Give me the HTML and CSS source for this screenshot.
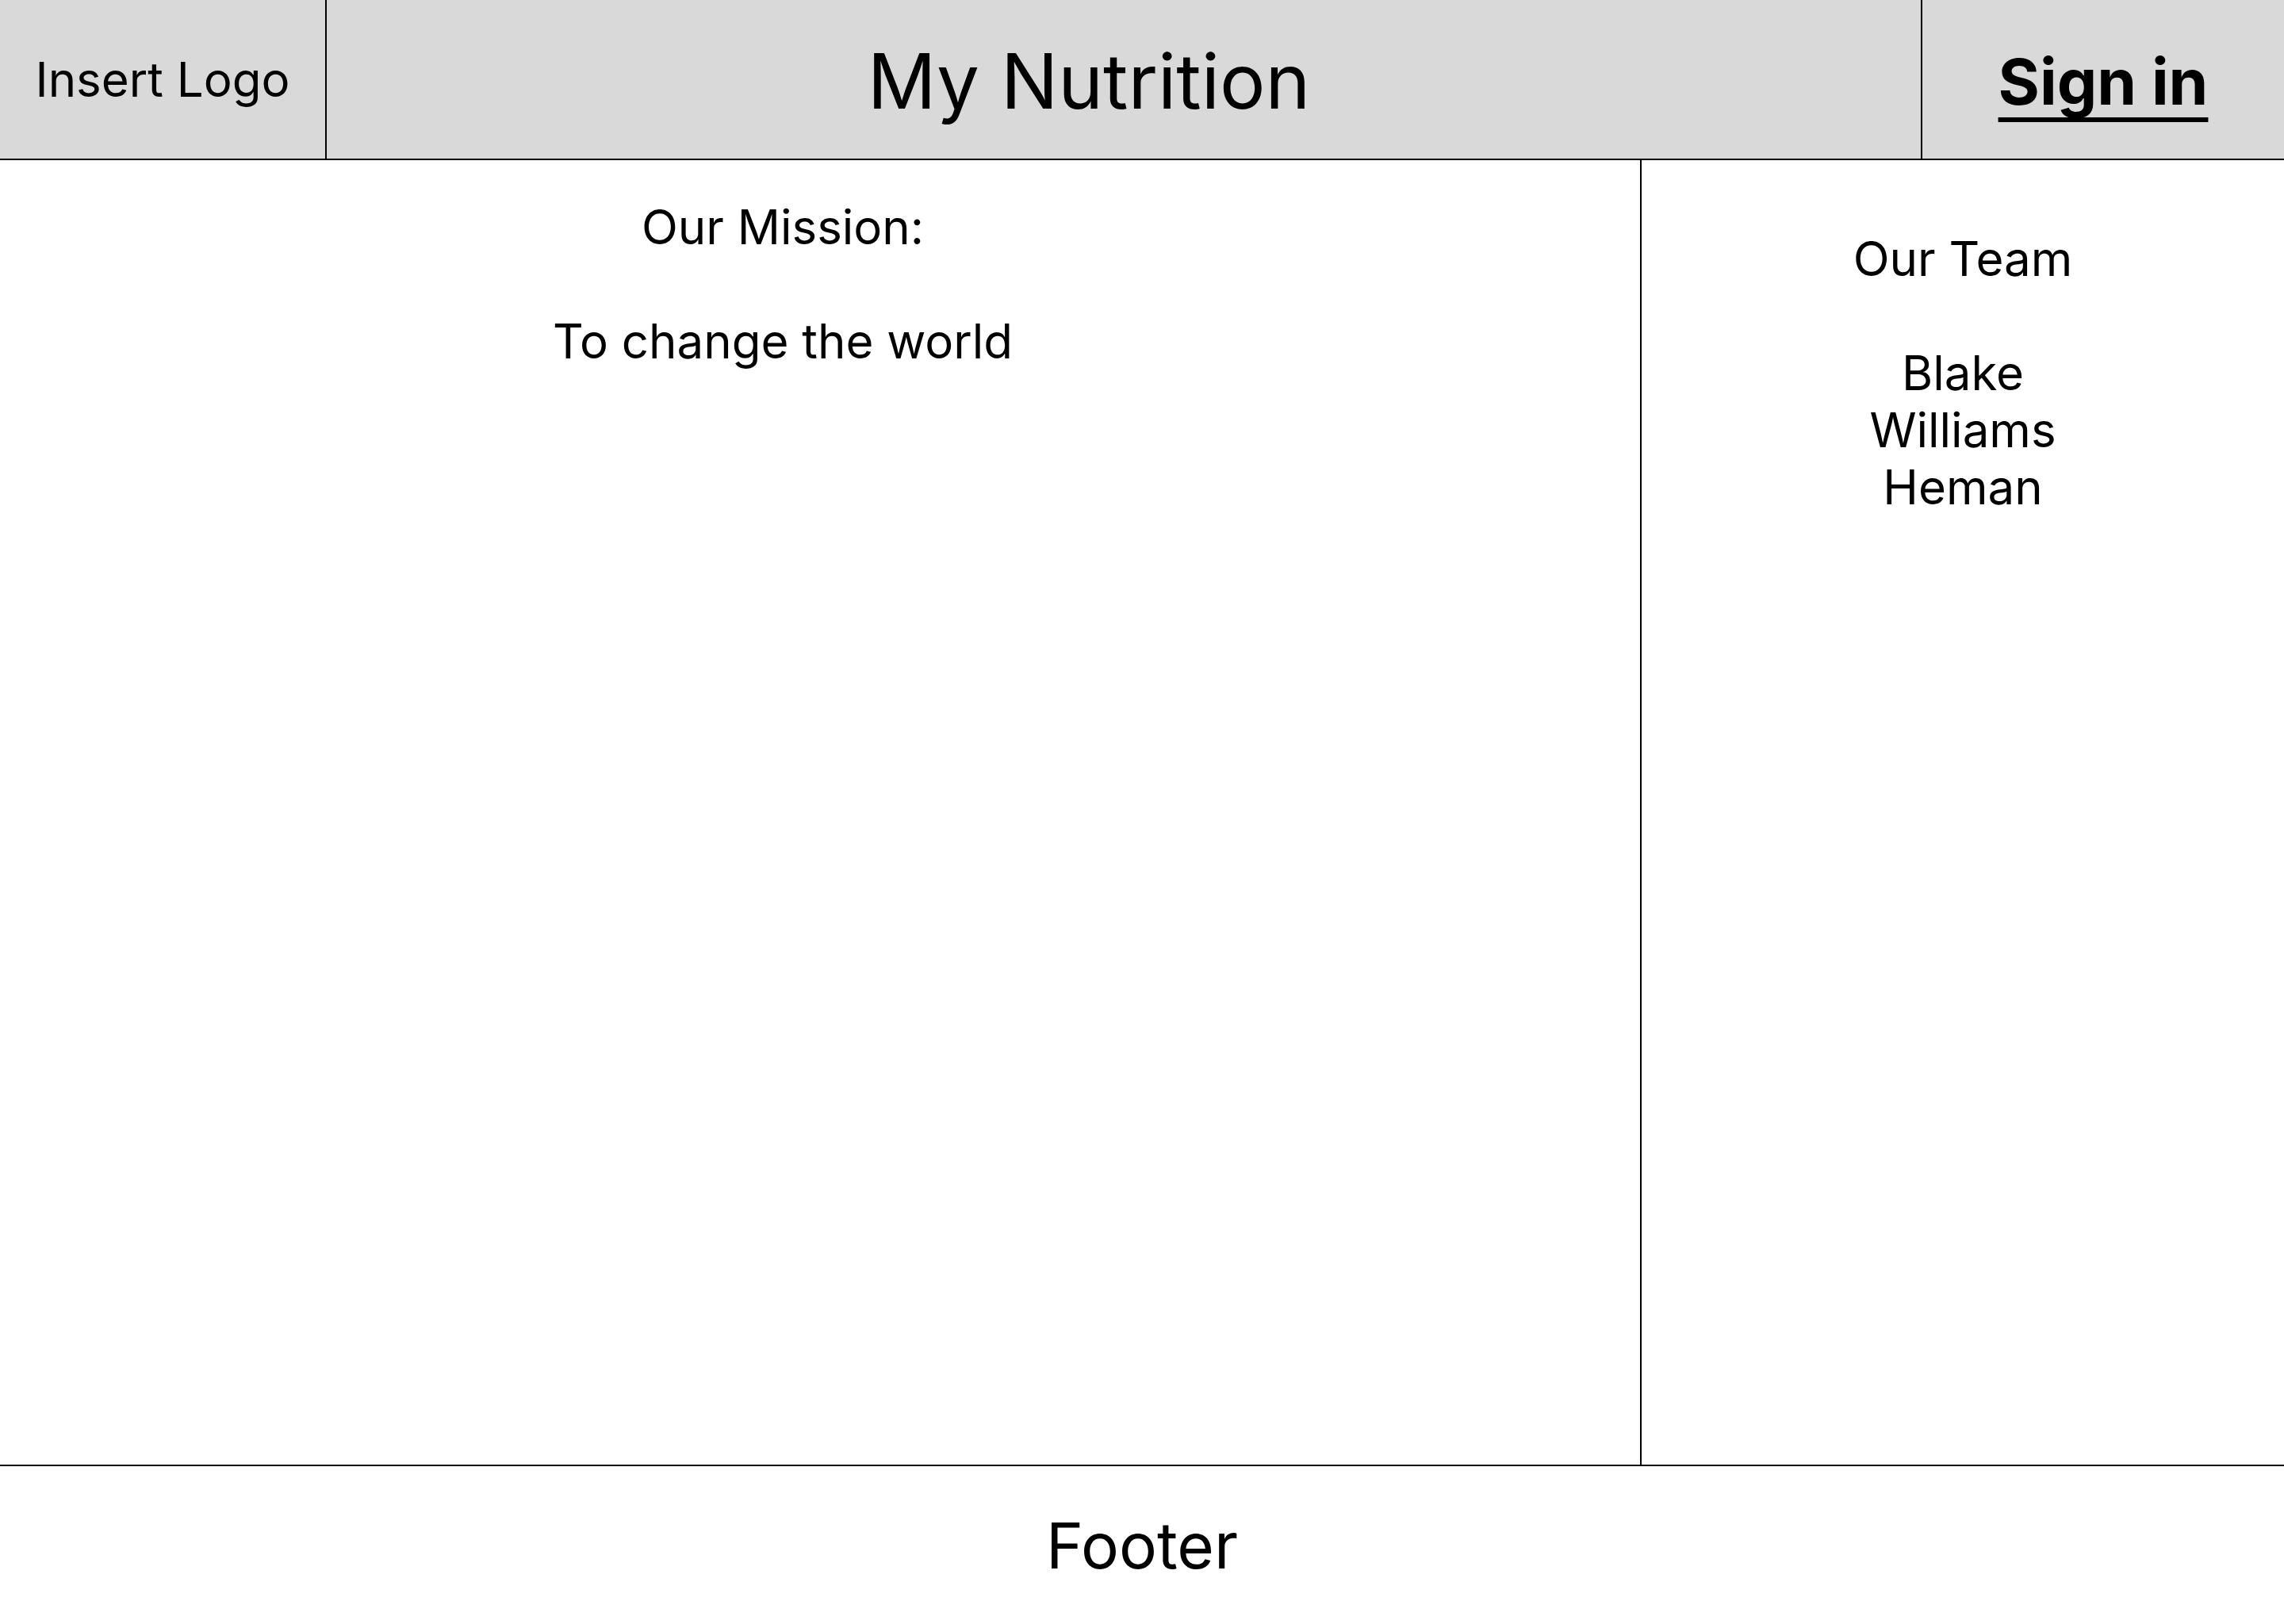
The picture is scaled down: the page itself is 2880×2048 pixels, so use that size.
FILE: index.html
```html
<!DOCTYPE html>
<html lang="en">
<head>
<meta charset="utf-8">
<title>My Nutrition</title>
<link rel="stylesheet" href="styles.css">
</head>
<body>
<div class="page">
  <header class="header">
    <div class="logo">Insert Logo</div>
    <div class="title">My Nutrition</div>
    <div class="signin"><a href="#" class="signin-link">Sign in</a></div>
  </header>
  <main class="main">
    <section class="mission">
      <p class="line">Our Mission:</p>
      <p class="line gap">To change the world</p>
    </section>
    <aside class="team">
      <p class="line">Our Team</p>
      <p class="line gap">Blake</p>
      <p class="line">Williams</p>
      <p class="line">Heman</p>
    </aside>
  </main>
  <footer class="footer">Footer</footer>
</div>
</body>
</html>
```

FILE: styles.css
```css
* { box-sizing: border-box; }

html, body {
  margin: 0;
  padding: 0;
  background: #ffffff;
}

body {
  font-family: "Inter", "Noto Sans", sans-serif;
  color: #000000;
}

.page {
  width: 2880px;
  height: 2048px;
  display: flex;
  flex-direction: column;
}

.header {
  height: 202px;
  flex: 0 0 202px;
  display: flex;
  background: #d9d9d9;
  border-bottom: 2px solid #000;
}

.logo {
  width: 412px;
  border-right: 2px solid #000;
  display: flex;
  align-items: center;
  justify-content: center;
  font-size: 60px;
}

.title {
  flex: 1;
  border-right: 2px solid #000;
  display: flex;
  align-items: center;
  justify-content: center;
  padding-right: 88px;
  padding-top: 4px;
  font-size: 96px;
}

.signin {
  width: 456px;
  display: flex;
  align-items: center;
  justify-content: center;
  padding-top: 4px;
}

.signin-link {
  color: #000;
  font-size: 80px;
  font-weight: 700;
  text-decoration: underline;
  text-decoration-thickness: 6px;
  text-underline-offset: 16px;
  text-decoration-skip-ink: none;
}

.main {
  flex: 0 0 1647px;
  display: flex;
  border-bottom: 2px solid #000;
}

.mission {
  width: 2070px;
  border-right: 2px solid #000;
  padding-top: 48px;
  padding-right: 94px;
  text-align: center;
}

.team {
  flex: 1;
  padding-top: 88px;
  text-align: center;
}

.line {
  margin: 0;
  font-size: 60px;
  line-height: 72px;
}

.gap {
  margin-top: 72px;
}

.footer {
  flex: 1;
  display: flex;
  align-items: center;
  justify-content: center;
  font-size: 80px;
}
```
